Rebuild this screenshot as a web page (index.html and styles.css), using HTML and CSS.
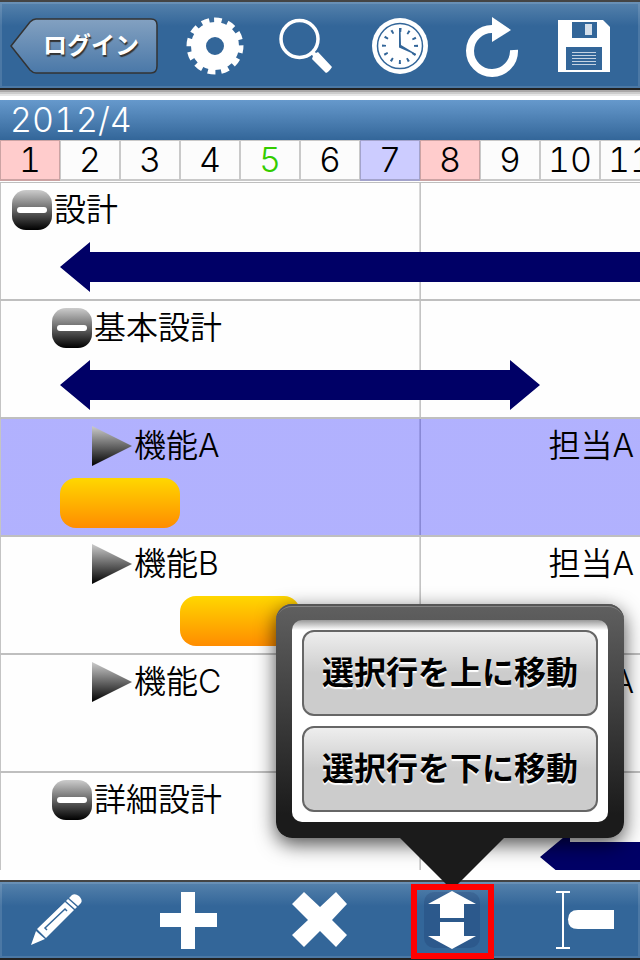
FILE: index.html
```
<!DOCTYPE html>
<html lang="ja">
	<head>
		<meta charset="utf-8">
		<meta name="viewport" content="width=device-width">
		<title>2012/4</title>
		<link rel="stylesheet" href="styles.css">
	</head>
	<body>
		<header class="toolbar header">
			<button class="back" type="button">
				<svg class="back-shape" viewBox="0 0 148 56" aria-hidden="true">
					<defs>
						<linearGradient id="backfill" x1="0" y1="0" x2="0" y2="1">
							<stop offset="0" stop-color="#83a1c1"/>
							<stop offset="1" stop-color="#4a78a8"/>
						</linearGradient>
					</defs>
					<path d="M1 28 L20 4 Q23 1 26 1 H141 Q147 1 147 7 V48 Q147 55 141 55 H26 Q23 55 20 52 Z" fill="url(#backfill)" stroke="#333" stroke-width="1.5"/>
				</svg>
				<span class="back-text">ログイン</span>
			</button>
			<nav class="tools">
				<button class="tool" type="button" aria-label="設定">
					<svg viewBox="0 0 56 56">
						<circle cx="28" cy="28" r="16.500" fill="none" stroke="#fff" stroke-width="15"/>
						<circle cx="28" cy="28" r="25.500" fill="none" stroke="#fff" stroke-width="6" stroke-dasharray="7.550 5.800" transform="rotate(-92 28 28)"/>
					</svg>
				</button>
				<button class="tool" type="button" aria-label="検索">
					<svg viewBox="0 0 56 56">
						<circle cx="20.500" cy="21" r="18.500" fill="none" stroke="#fff" stroke-width="3.500"/>
						<path d="M31 35 L34 32 L37 35 L39 34 L53 49 Q50 54 47 55 L33 41 L34 38 Z" fill="#fff"/>
					</svg>
				</button>
				<button class="tool" type="button" aria-label="今日">
					<svg viewBox="0 0 56 56">
						<circle cx="28" cy="28" r="28" fill="#fff"/>
						<circle cx="28" cy="28" r="22.500" fill="none" stroke="#369" stroke-width="1.500"/>
						<circle cx="28" cy="28" r="16" fill="none" stroke="#369" stroke-width="4" stroke-dasharray="2 6.378" transform="rotate(-3.600 28 28)"/>
						<path d="M27 10 H28.500 L29 27 L44 36 V37 L27 29.500 Z" fill="#369"/>
					</svg>
				</button>
				<button class="tool" type="button" aria-label="更新">
					<svg viewBox="0 0 56 56">
						<path d="M29 11 A22 22 0 1 0 50 32" fill="none" stroke="#fff" stroke-width="8"/>
						<path d="M28 -1 L47 12 L28 24 Z" fill="#fff"/>
					</svg>
				</button>
				<button class="tool" type="button" aria-label="保存">
					<svg viewBox="0 0 56 56">
						<path d="M2 2 H47 L54 9 V54 H2 Z" fill="#fff"/>
						<path d="M16 4 H41 V20 H16 Z M10 29 H46 V52 H10 Z" fill="#369"/>
						<path d="M29 6 H36 V17 H29 Z" fill="#d5dfea"/>
						<path d="M16 34.500 H40 M16 37.500 H40 M16 40.500 H40 M16 43.500 H40 M16 46.500 H40" stroke="#c4d2e2"/>
					</svg>
				</button>
			</nav>
		</header>

		<main class="schedule">
			<h1 class="month">2012/4</h1>
			<ol class="days">
				<li class="day holiday">1</li>
				<li class="day">2</li>
				<li class="day">3</li>
				<li class="day">4</li>
				<li class="day today">5</li>
				<li class="day">6</li>
				<li class="day saturday">7</li>
				<li class="day holiday">8</li>
				<li class="day">9</li>
				<li class="day">10</li>
				<li class="day">11</li>
			</ol>

			<div class="chart">
				<section class="row">
					<div class="task level1"><button class="fold" type="button" aria-label="閉じる"></button><span>設計</span></div>
					<div class="track"><div class="summary" style="grid-column: 2 / span 18"></div></div>
				</section>
				<section class="row">
					<div class="task level2"><button class="fold" type="button" aria-label="閉じる"></button><span>基本設計</span></div>
					<div class="track"><div class="summary" style="grid-column: 2 / span 8"></div></div>
				</section>
				<section class="row selected">
					<div class="task level3"><i class="leaf"></i><span>機能A</span><span class="person">担当A</span></div>
					<div class="track"><div class="bar" style="grid-column: 2 / span 2"></div></div>
				</section>
				<section class="row">
					<div class="task level3"><i class="leaf"></i><span>機能B</span><span class="person">担当A</span></div>
					<div class="track"><div class="bar" style="grid-column: 4 / span 2"></div></div>
				</section>
				<section class="row">
					<div class="task level3"><i class="leaf"></i><span>機能C</span><span class="person">担当A</span></div>
					<div class="track"><div class="bar" style="grid-column: 6 / span 4"></div></div>
				</section>
				<section class="row">
					<div class="task level2"><button class="fold" type="button" aria-label="閉じる"></button><span>詳細設計</span></div>
					<div class="track"><div class="summary" style="grid-column: 10 / span 10"></div></div>
				</section>
			</div>
		</main>

		<footer class="toolbar footer">
			<button class="tool" type="button" aria-label="編集">
				<svg viewBox="0 0 56 56">
					<path d="M3 53 L8 39 L17 47 Z M9 37 L37 10 L46 18 L18 46 Z M38 9 L40 7 L49 15 L47 17 Z M41 6 L44 3 Q47 1 51 4 Q55 8 53 11 L50 14 Z" fill="#fff"/>
					<path d="M19 38 L17 36 L37 17 L39 19" fill="none" stroke="#369" stroke-width="1.500"/>
				</svg>
			</button>
			<button class="tool" type="button" aria-label="追加">
				<svg viewBox="0 0 56 56">
					<path d="M21 0 H35 V21 H57 V35 H35 V57 H21 V35 H0 V21 H21 Z" fill="#fff"/>
				</svg>
			</button>
			<button class="tool" type="button" aria-label="削除">
				<svg viewBox="0 0 56 56">
					<path d="M12 0 L28 15 L44 0 L55 12 L40 28 L55 43 L44 55 L28 39 L12 55 L0 43 L16 28 L0 12 Z" fill="#fff"/>
				</svg>
			</button>
			<div class="move">
				<button class="tool active" type="button" aria-label="移動" aria-expanded="true">
					<svg viewBox="0 0 56 56">
						<path d="M28 -1 L52 12 H40 V26 H16 V12 H4 Z M16 30 H40 V44 H52 L28 57 L4 44 H16 Z" fill="#fff"/>
					</svg>
				</button>
				<div class="popup">
					<div class="popup-body">
						<button class="choice" type="button">選択行を上に移動</button>
						<button class="choice" type="button">選択行を下に移動</button>
					</div>
				</div>
			</div>
			<button class="tool" type="button" aria-label="日程">
				<svg viewBox="0 0 56 56">
					<path d="M0 0 H14 M0 56 H14 M7 0 V56" fill="none" stroke="#fff" stroke-width="2"/>
					<path d="M58 18 H22 Q12 18 12 27.500 Q12 37 22 37 H58 Z" fill="#fff"/>
				</svg>
			</button>
		</footer>
	</body>
</html>
```
FILE: styles.css
```
* {
	box-sizing: border-box;
}

body {
	margin: 0;
	height: 100vh;
	display: flex;
	flex-direction: column;
	overflow: hidden;
	background: #fff;
	color: #000;
	font-family: Inter, "Noto Sans CJK JP", sans-serif;
	font-size: 32px;
	font-weight: 350;
}

button {
	margin: 0;
	padding: 0;
	border: 0;
	background: none;
	font-family: inherit;
}

/* blue bars at the top and bottom */
.toolbar {
	display: flex;
	flex: none;
	border-top: 2px solid #444;
	border-bottom: 2px solid #222;
	background: linear-gradient(#5682ac, #369 24px);
	box-shadow: inset 0 0 0 2px rgba(255, 255, 255, 0.12);
}

.header {
	padding: 16px 28px 14px 10px;
	box-shadow: inset 0 0 0 2px rgba(255, 255, 255, 0.12), 0 2px 0 #aaa8a8, 0 4px 0 #ccc, 0 6px 0 #e6e6e6;
}

.footer {
	justify-content: space-between;
	padding: 10px 28px;
}

.tools {
	display: flex;
	flex: 1;
	justify-content: space-between;
	margin-left: 29px;
}

.tool {
	display: block;
	width: 56px;
	height: 56px;
}

.tool svg {
	display: block;
	overflow: visible;
}

/* login button, text over the arrow shape */
.back {
	display: grid;
	width: 148px;
	height: 56px;
}

.back-shape,
.back-text {
	grid-area: 1 / 1;
}

.back-text {
	padding-left: 14px;
	color: #fff;
	font-size: 24px;
	font-weight: 700;
	line-height: 56px;
	text-shadow: 1px 2px 1px #333;
}

.schedule {
	display: flex;
	flex: 1;
	flex-direction: column;
	min-height: 0;
	margin: 10px 0;
}

.month {
	flex: none;
	margin: 0;
	padding-left: 10px;
	background: linear-gradient(#69c, #369);
	color: #fff;
	font-size: 34px;
	font-weight: 300;
	line-height: 40px;
	font-variant-numeric: tabular-nums;
}

.days {
	display: flex;
	flex: none;
	margin: 0 0 1px;
	padding: 0;
	overflow: hidden;
	list-style: none;
}

.day {
	flex: none;
	width: 60px;
	height: 41px;
	border: 1px solid rgba(0, 0, 0, 0.2);
	border-bottom-width: 2px;
	background: #fcfcfc;
	font-size: 34px;
	line-height: 38px;
	text-align: center;
	font-variant-numeric: tabular-nums;
}

.holiday {
	background: #fcc;
}

.saturday {
	background: #ccf;
}

.today {
	color: #3c0;
}

/* the week lines are drawn by the background */
.chart {
	flex: 1;
	min-height: 0;
	overflow: hidden;
	border-top: 1px solid #bfbfbf;
	background: repeating-linear-gradient(to right, #c4c4c4 0 1px, #fefefe 1px 419px, #d9d9d9 419px 420px);
}

.row {
	padding-top: 7px;
	height: 118px;
	border-bottom: 2px solid #bfbfbf;
}

.selected {
	background: linear-gradient(rgba(0, 0, 255, 0.3), rgba(0, 0, 255, 0.3)) 1px 0 no-repeat padding-box;
}

.task {
	display: flex;
	align-items: center;
	gap: 2px;
	height: 40px;
	padding-right: 6px;
	line-height: 42px;
	white-space: nowrap;
}

.level1 {
	padding-left: 12px;
}

.level2 {
	padding-left: 52px;
}

.level3 {
	padding-left: 92px;
}

.person {
	margin-left: auto;
}

.fold {
	display: grid;
	place-items: center;
	width: 40px;
	height: 40px;
	border-radius: 14px;
	background: linear-gradient(#ccc, #000);
}

.fold::before {
	content: "";
	width: 30px;
	height: 6px;
	border-radius: 3px;
	background: #fff;
}

.leaf {
	width: 40px;
	height: 40px;
	background: linear-gradient(#ccc, #000);
	clip-path: polygon(0 0, 100% 50%, 0 100%);
}

.track {
	display: grid;
	grid-template-columns: repeat(30, 60px);
	margin-top: 12px;
}

.bar {
	height: 50px;
	border-radius: 16px;
	background: linear-gradient(#ffd700, #ff8c00);
}

.summary {
	height: 50px;
	background: #006;
	clip-path: polygon(0 50%, 30px 0, 30px 10px, calc(100% - 30px) 10px, calc(100% - 30px) 0, 100% 50%, calc(100% - 30px) 100%, calc(100% - 30px) 40px, 30px 40px, 30px 100%);
}

/* move button and its menu */
.move {
	position: relative;
}

.active {
	border-radius: 10px;
	background: rgba(0, 0, 50, 0.12);
}

.move::after {
	content: "";
	position: absolute;
	inset: -8px -14px -11px -13px;
	border: 6px solid #f00;
}

.popup {
	position: absolute;
	right: -144px;
	bottom: 110px;
	width: 348px;
	padding: 16px;
	border-radius: 16px;
	background: linear-gradient(#606060, #1b1b1b 90%);
	box-shadow: inset 0 2px 0 #555, inset 0 4px 0 -1px #858585, 0 6px 20px rgba(0, 0, 0, 0.7);
}

.popup::after {
	content: "";
	position: absolute;
	top: 100%;
	left: 124px;
	width: 104px;
	height: 52px;
	background: #1b1b1b;
	clip-path: polygon(0 0, 100% 0, 50% 100%);
}

.popup-body {
	display: grid;
	gap: 10px;
	padding: 10px;
	border-radius: 10px;
	background: linear-gradient(#999, #fff 10px);
}

.choice {
	height: 86px;
	padding-bottom: 6px;
	border: 2px solid #666;
	border-radius: 12px;
	background: linear-gradient(#eee, #ccc 50%);
	color: #000;
	font-size: 32px;
	font-weight: 600;
	white-space: nowrap;
	text-shadow: 0 2px 1px #fff;
}
```
